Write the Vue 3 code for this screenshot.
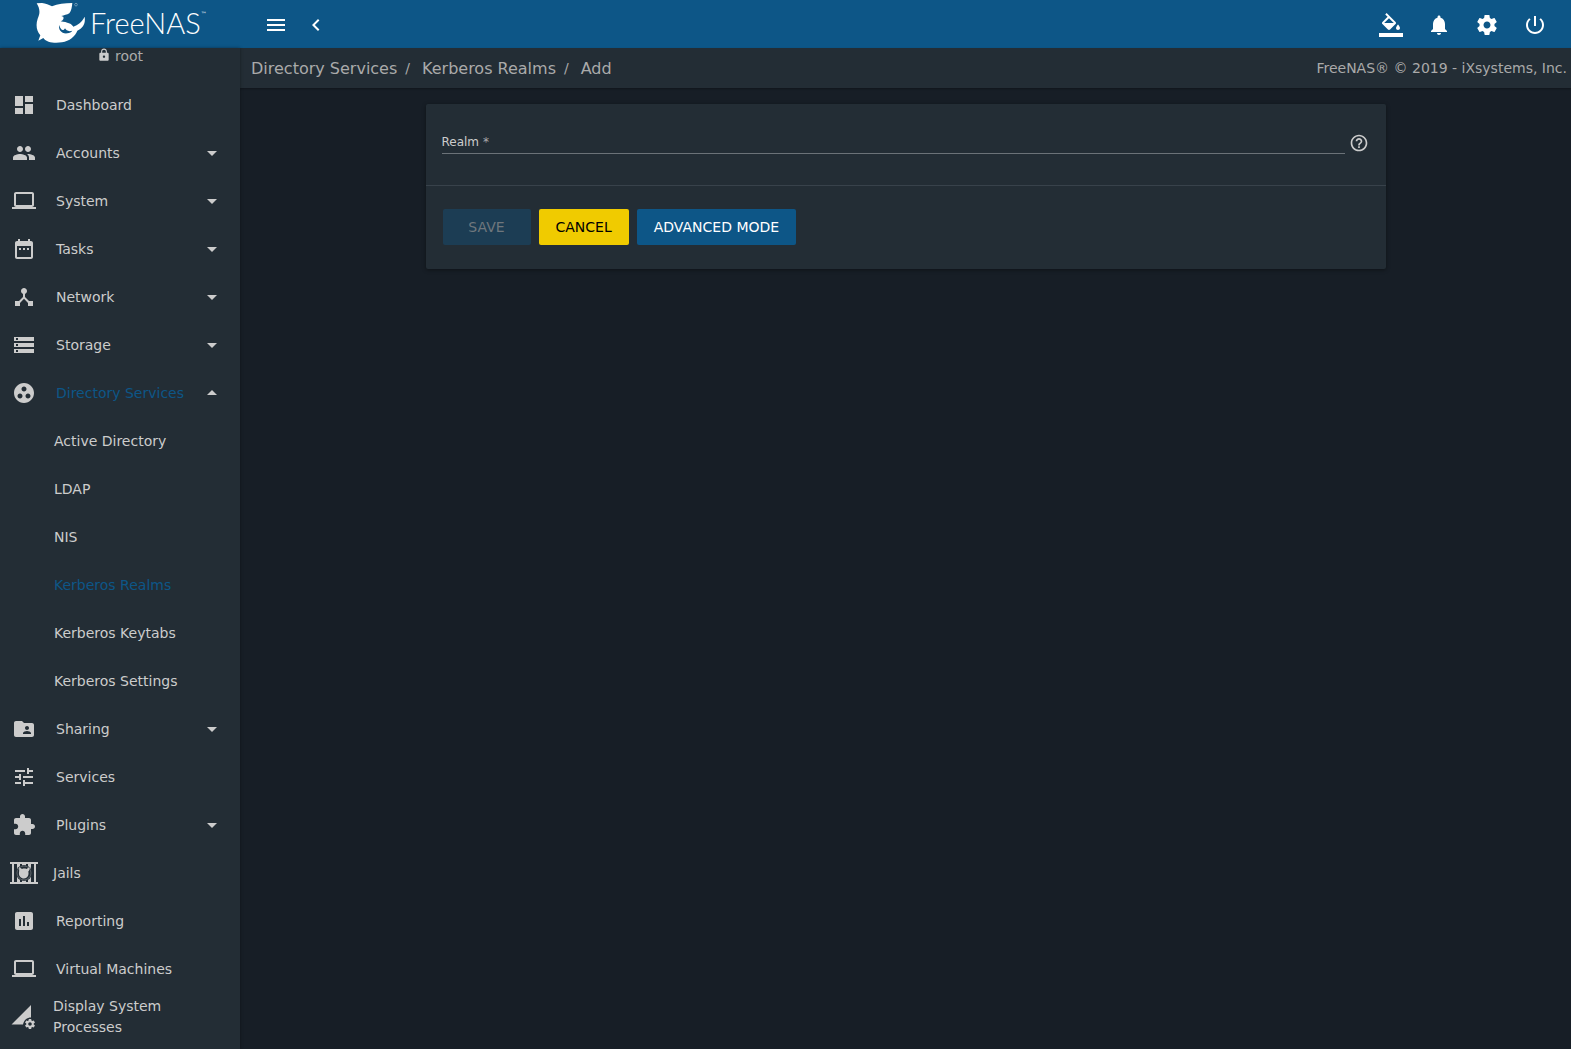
<script setup>
import { ref } from 'vue'

const realm = ref('')

const icons = {
  dashboard: 'M3 13h8V3H3v10zm0 8h8v-6H3v6zm10 0h8V11h-8v10zm0-18v6h8V3h-8z',
  people: 'M16 11c1.66 0 2.99-1.34 2.99-3S17.66 5 16 5c-1.66 0-3 1.34-3 3s1.34 3 3 3zm-8 0c1.66 0 2.99-1.34 2.99-3S9.66 5 8 5C6.34 5 5 6.34 5 8s1.34 3 3 3zm0 2c-2.33 0-7 1.17-7 3.5V19h14v-2.500c0-2.330-4.670-3.500-7-3.500zm8 0c-.29 0-.62.02-.97.05 1.160.84 1.970 1.970 1.970 3.450V19h6v-2.500c0-2.330-4.670-3.500-7-3.500z',
  laptop: 'M20 18c1.100 0 1.990-.9 1.990-2L22 5c0-1.100-.9-2-2-2H4c-1.100 0-2 .9-2 2v11c0 1.100.9 2 2 2H0v2h24v-2h-4zM4 5h16v11H4V5z',
  calendar: 'M9 11H7v2h2v-2zm4 0h-2v2h2v-2zm4 0h-2v2h2v-2zm2-7h-1V2h-2v2H8V2H6v2H5c-1.110 0-1.990.9-1.990 2L3 20c0 1.100.89 2 2 2h14c1.100 0 2-.9 2-2V6c0-1.100-.9-2-2-2zm0 16H5V9h14v11z',
  hub: 'M17 16l-4-4V8.820C14.160 8.400 15 7.300 15 6c0-1.660-1.340-3-3-3S9 4.340 9 6c0 1.300.84 2.400 2 2.820V12l-4 4H3v5h5v-3.050l4-4.200 4 4.200V21h5v-5h-4z',
  storage: 'M2 20h20v-4H2v4zm2-3h2v2H4v-2zM2 4v4h20V4H2zm4 3H4V5h2v2zm-4 7h20v-4H2v4zm2-3h2v2H4v-2z',
  group: 'M12 2C6.480 2 2 6.480 2 12s4.480 10 10 10 10-4.480 10-10S17.520 2 12 2zM8 17.500c-1.380 0-2.500-1.120-2.500-2.500s1.120-2.500 2.500-2.500 2.500 1.120 2.500 2.500-1.120 2.500-2.500 2.500zM9.500 8c0-1.380 1.120-2.500 2.500-2.500s2.500 1.120 2.500 2.500-1.120 2.500-2.500 2.500S9.500 9.380 9.500 8zm6.500 9.500c-1.380 0-2.500-1.120-2.500-2.500s1.120-2.500 2.500-2.500 2.500 1.120 2.500 2.500-1.120 2.500-2.500 2.500z',
  share: 'M20 6h-8l-2-2H4c-1.100 0-1.990.9-1.990 2L2 18c0 1.100.9 2 2 2h16c1.100 0 2-.9 2-2V8c0-1.100-.9-2-2-2zm-5 3c1.100 0 2 .9 2 2s-.9 2-2 2-2-.9-2-2 .9-2 2-2zm4 8h-8v-1c0-1.330 2.670-2 4-2s4 .67 4 2v1z',
  tune: 'M3 17v2h6v-2H3zM3 5v2h10V5H3zm10 16v-2h8v-2h-8v-2h-2v6h2zM7 9v2H3v2h4v2h2V9H7zm14 4v-2H11v2h10zm-6-4h2V7h4V5h-4V3h-2v6z',
  plugin: 'M20.500 11H19V7c0-1.100-.9-2-2-2h-4V3.500C13 2.120 11.880 1 10.500 1S8 2.120 8 3.500V5H4c-1.100 0-1.990.9-1.990 2v3.800H3.500c1.490 0 2.700 1.210 2.700 2.700s-1.210 2.700-2.700 2.700H2V20c0 1.100.9 2 2 2h3.800v-1.500c0-1.490 1.210-2.700 2.700-2.700 1.490 0 2.700 1.210 2.700 2.700V22H17c1.100 0 2-.9 2-2v-4h1.500c1.380 0 2.500-1.120 2.500-2.500S21.880 11 20.500 11z',
  report: 'M19 3H5c-1.100 0-2 .9-2 2v14c0 1.100.9 2 2 2h14c1.100 0 2-.9 2-2V5c0-1.100-.9-2-2-2zM9 17H7v-7h2v7zm4 0h-2V7h2v10zm4 0h-2v-4h2v4z',
  gear: 'M19.430 12.980c.04-.32.07-.64.07-.98s-.03-.66-.07-.98l2.110-1.650c.19-.15.24-.42.12-.64l-2-3.460c-.12-.22-.39-.3-.61-.22l-2.490 1c-.52-.4-1.080-.73-1.690-.98l-.38-2.650C14.460 2.180 14.250 2 14 2h-4c-.25 0-.46.18-.49.42l-.38 2.650c-.61.25-1.170.59-1.690.98l-2.490-1c-.23-.09-.49 0-.61.22l-2 3.460c-.13.22-.07.49.12.64l2.110 1.650c-.04.32-.07.65-.07.98s.03.66.07.98l-2.110 1.650c-.19.15-.24.42-.12.64l2 3.460c.12.22.39.3.61.22l2.490-1c.52.4 1.080.73 1.690.98l.38 2.650c.03.24.24.42.49.42h4c.25 0 .46-.18.49-.42l.38-2.650c.61-.25 1.170-.59 1.690-.98l2.490 1c.23.09.49 0 .61-.22l2-3.460c.12-.22.07-.49-.12-.64l-2.110-1.650zM12 15.500c-1.930 0-3.500-1.570-3.500-3.500s1.570-3.500 3.500-3.500 3.500 1.570 3.500 3.500-1.570 3.500-3.500 3.500z',
  bell: 'M12 22c1.100 0 2-.9 2-2h-4c0 1.100.89 2 2 2zm6-6v-5c0-3.070-1.640-5.640-4.500-6.320V4c0-.83-.67-1.500-1.500-1.500s-1.500.67-1.500 1.500v.68C7.630 5.360 6 7.920 6 11v5l-2 2v1h16v-1l-2-2z',
  power: 'M13 3h-2v10h2V3zm4.830 2.170l-1.420 1.420C17.990 7.860 19 9.810 19 12c0 3.870-3.130 7-7 7s-7-3.130-7-7c0-2.190 1.010-4.140 2.580-5.420L6.170 5.170C4.230 6.820 3 9.260 3 12c0 4.970 4.030 9 9 9s9-4.030 9-9c0-2.740-1.230-5.180-3.170-6.830z',
  fill: 'M16.560 8.940L7.620 0 6.210 1.410l2.380 2.380-5.150 5.150c-.59.59-.59 1.540 0 2.120l5.500 5.500c.29.29.68.44 1.060.44s.77-.15 1.060-.44l5.500-5.500c.59-.58.59-1.530 0-2.120zM5.210 10L10 5.210 14.790 10H5.210zM19 11.500s-2 2.170-2 3.500c0 1.100.9 2 2 2s2-.9 2-2c0-1.330-2-3.500-2-3.500zM0 20h24v4H0z',
  menu: 'M3 18h18v-2H3v2zm0-5h18v-2H3v2zm0-7v2h18V6H3z',
  back: 'M15.410 7.410L14 6l-6 6 6 6 1.410-1.410L10.830 12z',
  lock: 'M18 8h-1V6c0-2.760-2.240-5-5-5S7 3.240 7 6v2H6c-1.100 0-2 .9-2 2v10c0 1.100.9 2 2 2h12c1.100 0 2-.9 2-2V10c0-1.100-.9-2-2-2zm-6 9c-1.100 0-2-.9-2-2s.9-2 2-2 2 .9 2 2-.9 2-2 2zm3.100-9H8.900V6c0-1.710 1.390-3.100 3.100-3.100 1.710 0 3.100 1.390 3.100 3.100v2z',
  help: 'M11 18h2v-2h-2v2zm1-16C6.480 2 2 6.480 2 12s4.480 10 10 10 10-4.480 10-10S17.520 2 12 2zm0 18c-4.410 0-8-3.590-8-8s3.590-8 8-8 8 3.590 8 8-3.590 8-8 8zm0-14c-2.210 0-4 1.790-4 4h2c0-1.100.9-2 2-2s2 .9 2 2c0 2-3 1.750-3 5h2c0-2.250 3-2.500 3-5 0-2.210-1.790-4-4-4z'
}

const nav = [
  { label: 'Dashboard', icon: 'dashboard' },
  { label: 'Accounts', icon: 'people', menu: true },
  { label: 'System', icon: 'laptop', menu: true },
  { label: 'Tasks', icon: 'calendar', menu: true },
  { label: 'Network', icon: 'hub', menu: true },
  { label: 'Storage', icon: 'storage', menu: true },
  {
    label: 'Directory Services',
    icon: 'group',
    menu: true,
    open: true,
    children: ['Active Directory', 'LDAP', 'NIS', 'Kerberos Realms', 'Kerberos Keytabs', 'Kerberos Settings']
  },
  { label: 'Sharing', icon: 'share', menu: true },
  { label: 'Services', icon: 'tune' },
  { label: 'Plugins', icon: 'plugin', menu: true },
  { label: 'Jails', custom: 'jail' },
  { label: 'Reporting', icon: 'report' },
  { label: 'Virtual Machines', icon: 'laptop' },
  { label: 'Display System Processes', custom: 'processes' }
]

const tools = [
  { label: 'Theme', icon: 'fill' },
  { label: 'Alerts', icon: 'bell' },
  { label: 'Settings', icon: 'gear' },
  { label: 'Power', icon: 'power' }
]
</script>

<template>
  <div class="app">
    <header class="topbar">
      <a class="brand" href="#" aria-label="FreeNAS">
        <svg class="shark" viewBox="0 0 150 126" aria-hidden="true">
          <path fill="#fff" d="M2 4 L18 3 C29 4 39 8 48 13 C65 6 86 3 109 3 C108 14 106 27 100 34 C93 38 84 40 76 42 C86 45 95 50 99 58 C103 63 108 68 112 74 C126 68 137 62 146 44 C149 65 141 78 124 86 C118 103 100 117 78 121 C54 125 32 121 22 108 L7 116 L13 100 C1 88 -1 67 5 50 C13 34 12 20 2 4 Z" />
          <path fill="#0d5687" d="M82 44 C95 46 106 54 111 72 C107 66 95 61 74 58 C82 54 84 50 82 44 Z" />
          <path fill="#0d5687" d="M70 69 C66 82 76 96 94 94 C101 93 106 90 109 86 C98 90 90 85 87 79 C82 90 72 82 70 69 Z" />
          <circle cx="120" cy="8" r="4" fill="none" stroke="#fff" stroke-width="2" opacity=".5" />
        </svg>
        <span class="wordmark">FreeNAS</span><span class="tm">™</span>
      </a>
      <div class="toggles">
        <button class="icon-btn" aria-label="Toggle menu"><svg viewBox="0 0 24 24"><path :d="icons.menu" /></svg></button>
        <button class="icon-btn" aria-label="Collapse"><svg viewBox="0 0 24 24"><path :d="icons.back" /></svg></button>
      </div>
      <div class="tools">
        <button v-for="t in tools" :key="t.label" class="icon-btn" :aria-label="t.label">
          <svg viewBox="0 0 24 24"><path :d="icons[t.icon]" /></svg>
        </button>
      </div>
    </header>

    <div class="body">
      <aside class="sidebar">
        <div class="user">
          <svg viewBox="0 0 24 24" aria-hidden="true"><path :d="icons.lock" /></svg>
          <span>root</span>
        </div>
        <nav>
          <template v-for="item in nav" :key="item.label">
            <a href="#" class="item" :class="{ active: item.open, special: item.custom }">
              <svg v-if="item.icon" class="glyph" viewBox="0 0 24 24" aria-hidden="true"><path :d="icons[item.icon]" /></svg>
              <svg v-else-if="item.custom === 'jail'" class="glyph" viewBox="0 0 28 24" aria-hidden="true">
                <path d="M0 1h28v2H0zM0 21h28v2H0zM2 3h2v18H2zM7 3h3v18H7zM12 3h4v18h-4zM18 3h3v18h-3zM24 3h2v18h-2z" />
                <circle cx="14" cy="12" r="8" fill="#232d35" />
                <circle cx="14" cy="12" r="7" fill="none" stroke="#ccc" stroke-width="1" opacity=".35" />
                <path d="M9 6l3 2c1.500-.6 3-.6 4.500 0L19.500 6c.3 2-.1 3.500-1.200 4.500 1 4-1.300 7-4.300 7s-5.500-2.500-5-6C9.300 10 9.200 8 9 6z" />
              </svg>
              <svg v-else class="glyph" viewBox="0 0 28 28" aria-hidden="true">
                <path d="M1.500 21.500L21 2v12.500c-4 0-7 2.500-8 7z" />
                <svg x="14" y="15" width="12" height="12" viewBox="0 0 24 24"><path :d="icons.gear" /></svg>
              </svg>
              <span class="label">{{ item.label }}</span>
              <svg v-if="item.menu" class="caret" viewBox="0 0 24 24" aria-hidden="true">
                <path :d="item.open ? 'M7 14l5-5 5 5z' : 'M7 10l5 5 5-5z'" />
              </svg>
            </a>
            <a v-for="c in item.children" :key="c" href="#" class="item child" :class="{ active: c === 'Kerberos Realms' }">{{ c }}</a>
          </template>
        </nav>
      </aside>

      <main class="content">
        <div class="crumbs">
          <nav class="trail" aria-label="Breadcrumb">
            <a href="#">Directory Services</a><span class="sep">/</span>
            <a href="#">Kerberos Realms</a><span class="sep">/</span>
            <a href="#">Add</a>
          </nav>
          <span class="copy">FreeNAS® © 2019 - iXsystems, Inc.</span>
        </div>
        <form class="card" @submit.prevent>
          <div class="fields">
            <div class="field">
              <label v-show="!realm" for="realm">Realm <span class="req">*</span></label>
              <input id="realm" v-model="realm" type="text" required />
            </div>
            <svg class="help" viewBox="0 0 24 24" role="img" aria-label="Help"><path :d="icons.help" /></svg>
          </div>
          <div class="actions">
            <button class="btn save" type="submit" disabled>SAVE</button>
            <button class="btn cancel" type="button">CANCEL</button>
            <button class="btn primary" type="button">ADVANCED MODE</button>
          </div>
        </form>
      </main>
    </div>
  </div>
</template>

<style>
body {
  margin: 0;
  background: #171e26;
}
</style>

<style scoped>
.app {
  display: flex;
  flex-direction: column;
  height: 100vh;
  font-family: "DejaVu Sans", sans-serif;
  font-size: 14px;
  color: #ccc;
}
a {
  color: inherit;
  text-decoration: none;
}
svg {
  fill: currentColor;
  flex: none;
}
.topbar {
  display: flex;
  align-items: center;
  flex: none;
  height: 48px;
  background: #0d5687;
  color: #fff;
}
.brand {
  display: flex;
  flex: none;
  box-sizing: border-box;
  width: 240px;
  height: 48px;
  padding: 0 0 2px 36px;
  align-items: center;
}
.shark {
  width: 50px;
  height: 42px;
}
.wordmark {
  margin-left: 4px;
  font: 300 29px/46px Lato, sans-serif;
}
.tm {
  align-self: flex-start;
  margin-top: 10px;
  font-size: 6px;
}
.icon-btn {
  display: flex;
  padding: 0;
  border: 0;
  background: none;
  color: inherit;
}
.icon-btn svg {
  width: 24px;
  height: 24px;
}
.toggles {
  display: flex;
  gap: 16px;
  margin-left: 24px;
  padding-top: 2px;
}
.tools {
  display: flex;
  gap: 24px;
  margin-left: auto;
  padding: 2px 24px 0 0;
}
.body {
  display: flex;
  flex: 1;
  min-height: 0;
}
.sidebar {
  flex: none;
  width: 240px;
  overflow: hidden;
  background: #232d35;
  box-shadow: 0 0 3px rgba(0, 0, 0, 0.4);
  z-index: 1;
}
.user {
  display: flex;
  justify-content: center;
  gap: 4px;
  height: 33px;
  line-height: 16px;
  color: #aaa;
}
.user svg {
  width: 14px;
  height: 14px;
  color: #ccc;
}
.item {
  display: flex;
  align-items: center;
  height: 48px;
  padding: 0 16px 0 12px;
  line-height: 21px;
}
.glyph {
  width: 24px;
  height: 24px;
  margin-right: 20px;
}
.special {
  padding-left: 10px;
}
.special .glyph {
  width: 28px;
  height: 28px;
  margin-right: 15px;
}
.label {
  flex: 1;
}
.caret {
  width: 24px;
  height: 24px;
}
.child {
  padding-left: 54px;
}
.active,
.active.child {
  color: #0d5687;
}
.active svg {
  color: #ccc;
}
.content {
  flex: 1;
  min-width: 0;
}
.crumbs {
  display: flex;
  align-items: center;
  height: 40px;
  padding: 0 4px 0 11px;
  background: #232d35;
  color: #aaa;
  box-shadow: 0 1px 2px rgba(0, 0, 0, 0.3);
}
.trail {
  display: flex;
  align-items: center;
  font-size: 16px;
}
.sep {
  margin: 0 12px 0 8px;
  font-size: 14px;
}
.copy {
  margin-left: auto;
}
.card {
  max-width: 960px;
  margin: 16px auto;
  border-radius: 2px;
  background: #232d35;
  box-shadow: 0 1px 4px rgba(0, 0, 0, 0.4);
}
.fields {
  display: flex;
  align-items: flex-start;
  padding: 26px 16px 31px;
  border-bottom: 1px solid #38424b;
}
.field {
  display: grid;
  flex: 1;
}
.field label,
.field input {
  grid-area: 1 / 1;
}
.field label {
  font-size: 12px;
  line-height: 24px;
  pointer-events: none;
}
.req {
  color: #aaa;
}
.field input {
  box-sizing: border-box;
  width: 100%;
  height: 24px;
  padding: 0;
  border: 0;
  border-bottom: 1px solid #6b7278;
  outline: 0;
  background: none;
  color: #ccc;
  font: inherit;
}
.help {
  width: 20px;
  height: 20px;
  margin: 3px 1px 0 4px;
}
.actions {
  display: flex;
  gap: 8px;
  padding: 23px 17px 24px;
}
.btn {
  min-width: 88px;
  height: 36px;
  padding: 0 17px;
  border: 0;
  border-radius: 2px;
  font: 14px/36px "DejaVu Sans", sans-serif;
  color: #fff;
}
.save {
  background: #1c3d54;
  color: #6f777d;
}
.cancel {
  background: #f0cb00;
  color: #000;
}
.primary {
  background: #0d5687;
}
</style>
